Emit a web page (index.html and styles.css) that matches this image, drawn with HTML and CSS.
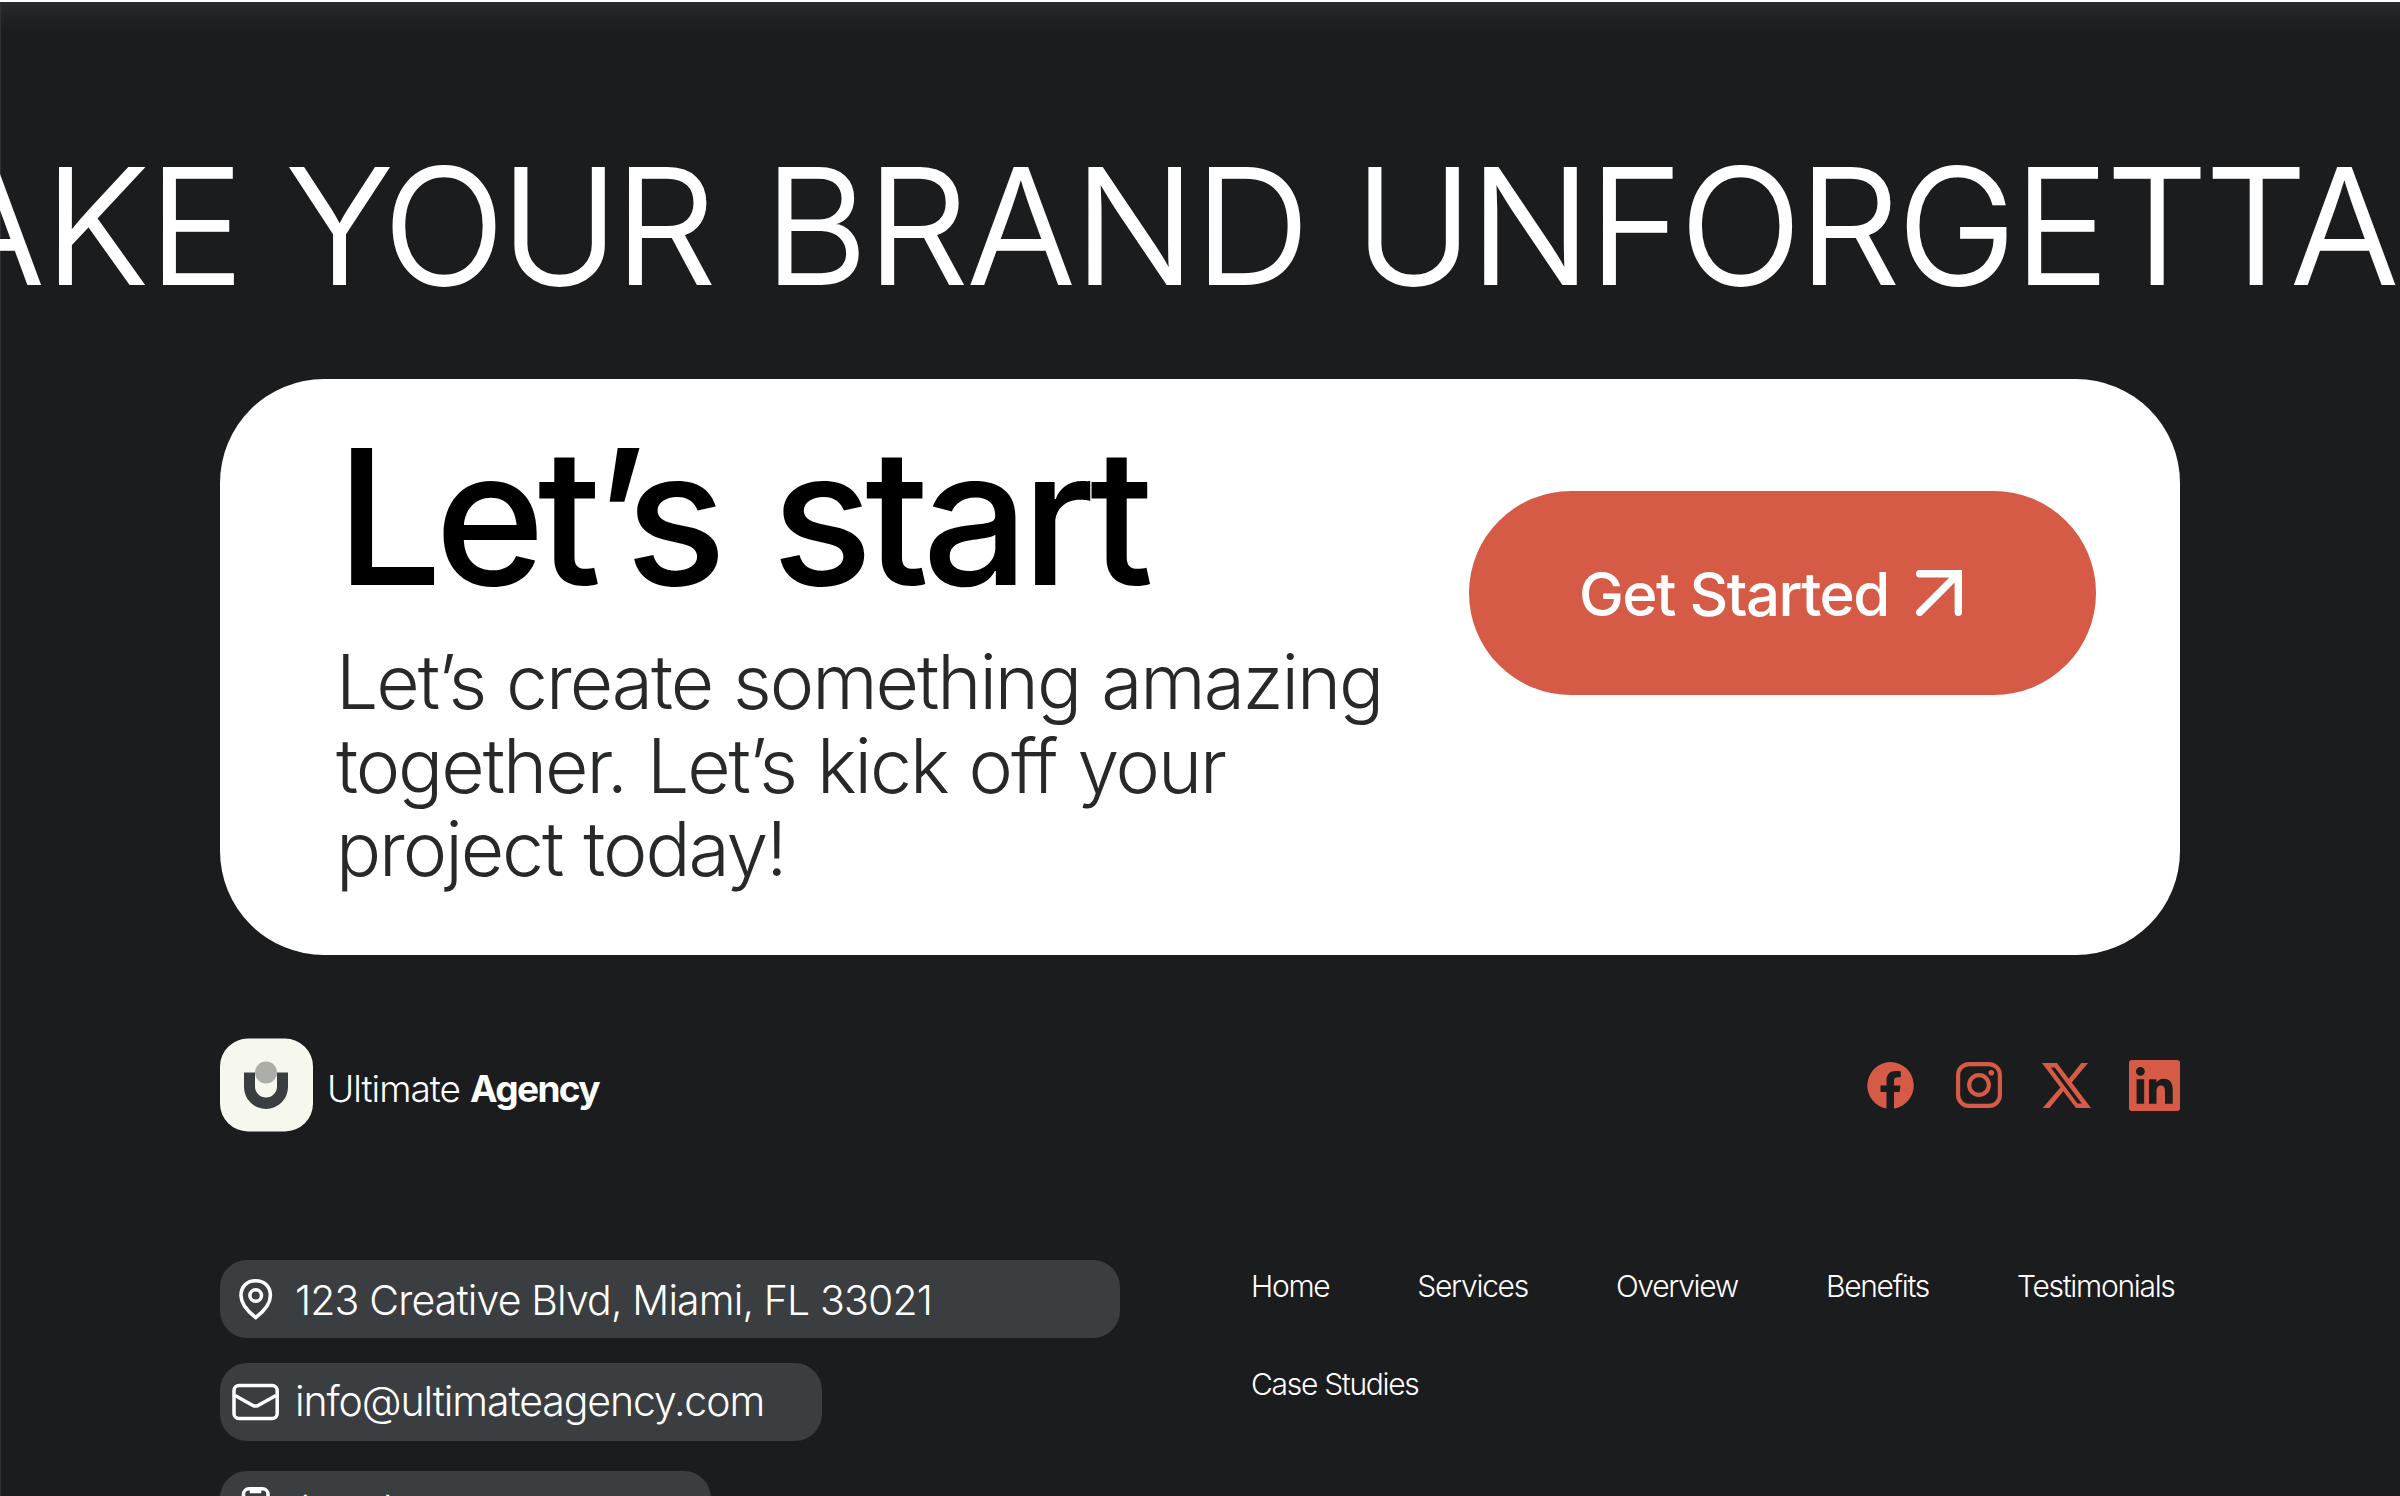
FILE: index.html
```html
<!DOCTYPE html>
<html lang="en">
<head>
<meta charset="UTF-8">
<meta name="viewport" content="width=device-width, initial-scale=1.0">
<title>Ultimate Agency</title>
<link rel="stylesheet" href="styles.css">
</head>
<body>

<footer class="footer">

  <!-- Scrolling headline -->
  <div class="marquee">
    <div class="marquee-text"><span class="w-make">MAKE</span><span class="w-your">YOUR</span><span class="w-brand">BRAND</span><span class="w-unf">UNFORGETTABLE</span></div>
  </div>

  <!-- Call to action -->
  <section class="cta">
    <div class="cta-content">
      <h2>Let’s start</h2>
      <p>Let’s create something amazing<br>together. Let’s kick off your<br>project today!</p>
    </div>
    <a class="cta-button" href="#">
      <span>Get Started</span>
      <svg width="46" height="46" viewBox="0 0 46 46" fill="none" stroke="#fff" stroke-width="7.4" stroke-linecap="round" stroke-linejoin="miter"><path d="M3.7 3.7H42.3V42.3M3.7 42.3L42 4"/></svg>
    </a>
  </section>

  <!-- Logo and social links -->
  <div class="brand-row">
    <a class="logo" href="#">
      <svg width="93" height="94" viewBox="0 0 93 94">
        <rect y=".5" width="93" height="93" rx="28" fill="#f6f8ee"/>
        <path d="M24 34.500H35V48.500a11 11 0 0 0 22 0V34.500H68V49a22 22 0 0 1-44 0Z" fill="#3b3e41"/>
        <circle cx="46" cy="34.500" r="11" fill="#abaea9"/>
      </svg>
      <span class="logo-light">Ultimate</span>
      <span class="logo-bold">Agency</span>
    </a>
    <div class="social">
      <svg class="facebook" width="47" height="47" viewBox="0 0 47 47"><path fill="#d65b47" d="M23.500 0a23.500 23.500 0 0 0-4 46.600V30H13.500v-6.500H19.500V18.500C19.500 12.300 23 9 28.600 9c2.100 0 3.500.1 5.200.4v5.800h-2.800c-3 0-4 1.300-4 3.600v4.700h6.500L32.500 30H27v16.700A23.500 23.500 0 0 0 23.500 0Z"/></svg>
      <svg class="instagram" width="46" height="46" viewBox="0 0 46 46" fill="none" stroke="#d65b47" stroke-width="4.200"><rect x="2.100" y="2.100" width="41.800" height="41.800" rx="11"/><circle cx="23" cy="23" r="9.800"/><circle cx="35.300" cy="10.800" r="2.800" fill="#d65b47" stroke="none"/></svg>
      <svg class="x" width="49" height="45" viewBox="0 0 49 45"><path fill="#d65b47" fill-rule="evenodd" d="M0 0H15L26.800 15.800 39.300 0H46L29.800 19.600 49 45H34L21.300 28.200 7.500 45H.700L18.300 24.400ZM8.800 4.400 35.500 40.600H39.800L12.800 4.400Z"/></svg>
      <svg class="linkedin" width="51" height="51" viewBox="0 0 51 51"><path fill="#d65b47" fill-rule="evenodd" d="M3 0H48a3 3 0 0 1 3 3V48a3 3 0 0 1-3 3H3a3 3 0 0 1-3-3V3a3 3 0 0 1 3-3ZM7.600 19.300V43.700H15.200V19.300ZM11.400 7a4.400 4.400 0 1 0 0 8.800 4.400 4.400 0 0 0 0-8.800ZM20 19.300V43.700H27.500V31.600c0-3.600 1.200-6 4.400-6s4.100 2.500 4.100 6V43.700H43.700V29.500c0-7-3.200-10.800-8.900-10.800-3.900 0-6.200 1.800-7.400 3.900V19.300Z"/></svg>
    </div>
  </div>

  <div class="footer-bottom">
    <!-- Contact details -->
    <div class="contact">
      <div class="pill address">
        <svg width="50" height="46" viewBox="0 0 50 46" fill="none" stroke="#fff" stroke-width="3.600"><path d="M25.700 41.500C20.500 37.500 11 29.500 11 19.500 11 10.500 17 4.800 25.700 4.800S40.400 10.500 40.400 19.500C40.400 29.500 31 37.500 25.700 41.500Z"/><circle cx="25.700" cy="19.500" r="5.800"/></svg>
        <span>123 Creative Blvd, Miami, FL 33021</span>
      </div>
      <div class="pill email">
        <svg width="50" height="42" viewBox="0 0 50 42" fill="none" stroke="#fff" stroke-width="3.500"><rect x="4" y="4.500" width="43.200" height="33" rx="5"/><path d="M5 14.500 22.500 24.200Q25.500 26 28.500 24.200L46 14.500"/></svg>
        <span>info@ultimateagency.com</span>
      </div>
      <div class="pill phone">
        <svg width="50" height="50" viewBox="0 0 50 50" fill="none" stroke="#fff" stroke-width="3.500"><rect x="13.500" y="3.800" width="24.500" height="42" rx="5.500"/><path d="M21.500 4V6.500H29.500V4" fill="#fff"/></svg>
        <span>(305) 555-7890</span>
      </div>
    </div>

    <!-- Navigation -->
    <nav class="nav">
      <a href="#">Home</a>
      <a href="#">Services</a>
      <a href="#">Overview</a>
      <a href="#">Benefits</a>
      <a href="#">Testimonials</a>
      <a href="#">Case Studies</a>
    </nav>
  </div>

</footer>

</body>
</html>
```
FILE: styles.css
```css
* {
  box-sizing: border-box;
}

body {
  margin: 0;
  height: 1496px;
  overflow: hidden;
  background-color: #1b1c1e;
  color: white;
  font-family: Inter, "Liberation Sans", sans-serif;
  font-weight: 300;
}

a {
  color: inherit;
  text-decoration: none;
}

svg {
  display: block;
  flex: none;
}

.footer {
  height: 1496px;
  padding: 0 220px;
  border-top: 2px solid white;
  background: linear-gradient(#2a2c31, #202123 16px, #1b1c1e 32px);
  box-shadow: inset 1px 0 #303134;
  overflow: hidden;
}

/* Marquee */
.marquee {
  display: flex;
  height: 377px;
  margin: 0 -220px;
  padding-top: 124px;
  overflow: hidden;
}

.marquee-text {
  display: flex;
  margin-left: -208px;
  font-size: 160px;
  line-height: 200px;
  white-space: nowrap;
  -webkit-text-stroke: 1.8px white;
}

.w-make {
  letter-spacing: 0.4px;
}

.w-your {
  margin-left: 42px;
  letter-spacing: -4px;
}

.w-brand {
  margin-left: 52px;
  letter-spacing: -1px;
}

.w-unf {
  margin-left: 46px;
  letter-spacing: -2.7px;
}

/* Call to action card */
.cta {
  display: flex;
  justify-content: space-between;
  align-items: flex-start;
  height: 576px;
  padding: 0 84px 0 116px;
  border-radius: 104px;
  background-color: white;
}

.cta h2 {
  margin: 40px 0 0;
  color: black;
  font-size: 188px;
  font-weight: 500;
  line-height: 196px;
  letter-spacing: -7.6px;
  word-spacing: 10px;
  white-space: nowrap;
}

.cta p {
  margin: 25px 0 0;
  color: #262829;
  font-size: 75px;
  line-height: 83.5px;
  letter-spacing: -2.05px;
  word-spacing: 2px;
  white-space: nowrap;
}

.cta-button {
  display: flex;
  align-items: center;
  gap: 27px;
  width: 627px;
  height: 204px;
  margin-top: 112px;
  padding-left: 110px;
  border-radius: 102px;
  background-color: #d65b47;
  color: white;
  font-size: 60px;
  font-weight: 500;
  letter-spacing: -1.5px;
  white-space: nowrap;
}

.cta-button span {
  padding-top: 2px;
}

/* Logo row */
.brand-row {
  display: flex;
  justify-content: space-between;
  height: 305px;
  padding-top: 83px;
}

.logo {
  display: flex;
  align-items: center;
  height: 94px;
  font-size: 37px;
  white-space: nowrap;
}

.logo-light {
  margin-left: 14px;
  padding-top: 6px;
  letter-spacing: -1px;
}

.logo-bold {
  margin-left: 10px;
  padding-top: 6px;
  font-weight: 700;
  letter-spacing: -1.6px;
}

.social {
  display: flex;
  align-items: center;
  height: 94px;
}

.instagram {
  margin-left: 42px;
}

.x {
  margin-left: 40px;
}

.linkedin {
  margin-left: 38px;
}

/* Contact pills and nav */
.footer-bottom {
  display: flex;
}

.contact {
  flex: none;
  width: 1031px;
}

.pill {
  display: flex;
  align-items: center;
  height: 78px;
  padding-left: 10px;
  border-radius: 27px;
  background-color: #3b3e40;
  font-size: 41px;
  white-space: nowrap;
}

.pill span {
  margin-left: 15px;
}

.address {
  width: 900px;
  letter-spacing: -0.85px;
}

.address span {
  padding-top: 2px;
}

.email {
  width: 602px;
  margin-top: 25px;
  letter-spacing: -1.1px;
}

.email span {
  padding-bottom: 2px;
}

.phone {
  width: 491px;
  margin-top: 30px;
}

.phone span {
  padding-top: 5px;
}

.nav {
  display: flex;
  flex-wrap: wrap;
  align-content: flex-start;
  flex: none;
  gap: 58px 88px;
  width: 932px;
  padding-top: 6px;
  font-size: 30px;
  line-height: 40px;
  letter-spacing: -1.3px;
}
```
